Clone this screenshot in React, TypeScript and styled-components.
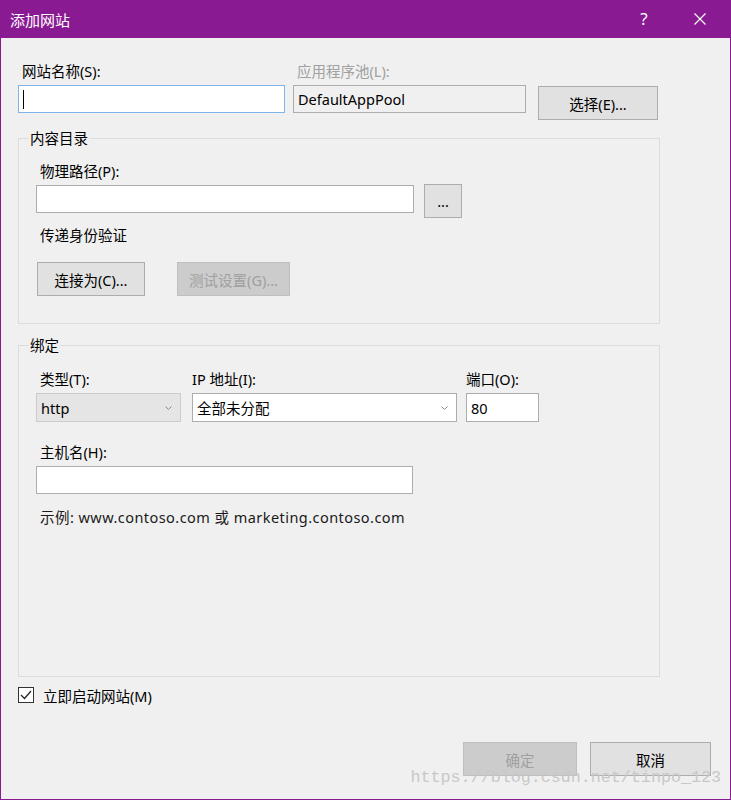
import React from "react";
import styled, { createGlobalStyle } from "styled-components";

const GlobalStyle = createGlobalStyle`
  html, body { margin: 0; padding: 0; background: #f0f0f0; }
  * { box-sizing: border-box; }
  body {
    font-family: "Segoe UI", "Noto Sans", "Noto Sans CJK SC", sans-serif;
    font-size: 14.5px;
    color: #000;
  }
`;

const PURPLE = "#8a1a92";

const Window = styled.div`
  position: relative;
  width: 731px;
  height: 800px;
  display: flex;
  flex-direction: column;
  border: 1px solid ${PURPLE};
  border-top: none;
  background: #f0f0f0;
  overflow: hidden;
`;

const TitleBar = styled.div`
  height: 38px;
  flex: none;
  background: ${PURPLE};
  color: #fff;
  display: flex;
  align-items: center;
  padding: 0 0 0 9px;
  font-size: 15px;
`;

const Title = styled.div`
  flex: 1;
  line-height: 20px;
  margin-top: 1px;
`;

const HelpGlyph = styled.div`
  width: 20px;
  text-align: center;
  font-size: 17px;
  line-height: 20px;
  margin-right: 40px;
  margin-top: -1px;
`;

const CloseBox = styled.div`
  width: 12px;
  height: 12px;
  margin-right: 24px;
  display: flex;
`;

const Body = styled.div`
  flex: 1;
  display: flex;
  flex-direction: column;
  align-items: flex-start;
  padding: 23px 19px 0 17px;
`;

const Row = styled.div<{ $mt?: number }>`
  display: flex;
  align-items: flex-start;
  margin-top: ${(p) => p.$mt ?? 0}px;
`;

const Field = styled.div<{ $w: number; $ml?: number }>`
  display: flex;
  flex-direction: column;
  width: ${(p) => p.$w}px;
  margin-left: ${(p) => p.$ml ?? 0}px;
`;

const Label = styled.div<{ $disabled?: boolean; $mt?: number; $indent?: number }>`
  height: 20px;
  line-height: 20px;
  margin: ${(p) => p.$mt ?? 0}px 0 4px ${(p) => p.$indent ?? 4}px;
  color: ${(p) => (p.$disabled ? "#a0a0a0" : "#000")};
  white-space: nowrap;
`;

const TextBox = styled.div<{
  $w?: number;
  $h?: number;
  $focus?: boolean;
  $readonly?: boolean;
}>`
  width: ${(p) => (p.$w ? `${p.$w}px` : "100%")};
  height: ${(p) => p.$h ?? 28}px;
  border: 1px solid ${(p) => (p.$focus ? "#7eb4ea" : "#adadad")};
  background: ${(p) => (p.$readonly ? "#f0f0f0" : "#fff")};
  display: flex;
  align-items: center;
  padding-left: 4px;
  white-space: nowrap;
`;

const Caret = styled.span`
  display: block;
  width: 1px;
  height: 19px;
  background: #000;
`;

const Button = styled.div<{ $w: number; $disabled?: boolean; $ml?: number; $mt?: number }>`
  width: ${(p) => p.$w}px;
  height: 34px;
  margin-left: ${(p) => p.$ml ?? 0}px;
  margin-top: ${(p) => p.$mt ?? 0}px;
  flex: none;
  display: flex;
  align-items: center;
  justify-content: center;
  background: ${(p) => (p.$disabled ? "#cccccc" : "#e1e1e1")};
  border: 1px solid ${(p) => (p.$disabled ? "#bfbfbf" : "#adadad")};
  color: ${(p) => (p.$disabled ? "#a0a0a0" : "#000")};
  white-space: nowrap;
`;

const Group = styled.fieldset<{ $mt: number }>`
  width: 642px;
  margin: ${(p) => p.$mt}px 0 0 0;
  padding: 0;
  border: 1px solid #dcdcdc;
  min-inline-size: 0;
`;

const Legend = styled.legend`
  padding: 0 1px;
  margin-left: 10px;
  line-height: 20px;
  height: 20px;
`;

const GroupBody = styled.div<{ $pt: number; $pb: number }>`
  display: flex;
  flex-direction: column;
  align-items: flex-start;
  padding: ${(p) => p.$pt}px 0 ${(p) => p.$pb}px 17px;
`;

const Select = styled.div<{ $w: number; $gray?: boolean; $ml?: number }>`
  width: ${(p) => p.$w}px;
  height: 29px;
  margin-left: ${(p) => p.$ml ?? 0}px;
  display: flex;
  align-items: center;
  justify-content: space-between;
  padding: 0 8px 0 4px;
  background: ${(p) => (p.$gray ? "#e5e5e5" : "#fff")};
  border: 1px solid ${(p) => (p.$gray ? "#cccccc" : "#adadad")};
  white-space: nowrap;
`;

const Hint = styled.div`
  height: 20px;
  line-height: 20px;
  margin: 13px 0 0 4px;
  color: #1a1a1a;
  letter-spacing: 0.45px;
  white-space: nowrap;
`;

const CheckRow = styled.div`
  display: flex;
  align-items: center;
  height: 20px;
  margin: 8px 0 0 0;
`;

const CheckBox = styled.div`
  width: 16px;
  height: 16px;
  border: 1px solid #333;
  background: #fff;
  margin-right: 9px;
  display: flex;
  align-items: center;
  justify-content: center;
`;

const Footer = styled.div`
  align-self: stretch;
  display: flex;
  justify-content: flex-end;
  gap: 13px;
  margin-top: 37px;
`;

const Watermark = styled.div`
  position: absolute;
  right: 9px;
  bottom: 11px;
  font-family: "Liberation Mono", "DejaVu Sans Mono", monospace;
  font-size: 16.7px;
  line-height: 20px;
  color: #c8c8c8;
  white-space: nowrap;
  pointer-events: none;
`;

const Chevron = () => (
  <svg width="7" height="4" viewBox="0 0 7 4">
    <polyline points="0.5,0.5 3.5,3.5 6.5,0.5" fill="none" stroke="#8a8a8a" strokeWidth="1" />
  </svg>
);

export default function App() {
  return (
    <>
      <GlobalStyle />
      <Window>
        <TitleBar>
          <Title>添加网站</Title>
          <HelpGlyph>?</HelpGlyph>
          <CloseBox>
            <svg width="12" height="12" viewBox="0 0 12 12">
              <path d="M0.5 0.5 L11.5 11.5 M11.5 0.5 L0.5 11.5" stroke="#fff" strokeWidth="1.2" fill="none" />
            </svg>
          </CloseBox>
        </TitleBar>
        <Body>
          <Row>
            <Field $w={267}>
              <Label>网站名称(S):</Label>
              <TextBox $focus>
                <Caret />
              </TextBox>
            </Field>
            <Field $w={233} $ml={8}>
              <Label $disabled>应用程序池(L):</Label>
              <TextBox $readonly>DefaultAppPool</TextBox>
            </Field>
            <Button $w={120} $ml={12} $mt={25}>
              选择(E)...
            </Button>
          </Row>

          <Group $mt={8}>
            <Legend>内容目录</Legend>
            <GroupBody $pt={13} $pb={27}>
              <Label>物理路径(P):</Label>
              <Row>
                <TextBox $w={378} />
                <Button $w={38} $ml={10} $mt={-1}>
                  ...
                </Button>
              </Row>
              <Label $mt={7}>传递身份验证</Label>
              <Row $mt={13}>
                <Button $w={108} $ml={1}>
                  连接为(C)...
                </Button>
                <Button $w={113} $ml={32} $disabled>
                  测试设置(G)...
                </Button>
              </Row>
            </GroupBody>
          </Group>

          <Group $mt={11}>
            <Legend>绑定</Legend>
            <GroupBody $pt={14} $pb={149}>
              <Row>
                <Field $w={145}>
                  <Label>类型(T):</Label>
                  <Select $w={145} $gray>
                    <span>http</span>
                    <Chevron />
                  </Select>
                </Field>
                <Field $w={265} $ml={11}>
                  <Label $indent={0}>IP 地址(I):</Label>
                  <Select $w={265}>
                    <span>全部未分配</span>
                    <Chevron />
                  </Select>
                </Field>
                <Field $w={73} $ml={9}>
                  <Label $indent={0}>端口(O):</Label>
                  <TextBox $h={29}>80</TextBox>
                </Field>
              </Row>
              <Label $mt={20}>主机名(H):</Label>
              <TextBox $w={377} />
              <Hint>示例: www.contoso.com 或 marketing.contoso.com</Hint>
            </GroupBody>
          </Group>

          <CheckRow>
            <CheckBox>
              <svg width="12" height="10" viewBox="0 0 12 10">
                <polyline points="1,5 4.5,8.5 11,1" fill="none" stroke="#222" strokeWidth="1.2" />
              </svg>
            </CheckBox>
            <span>立即启动网站(M)</span>
          </CheckRow>

          <Footer>
            <Button $w={114} $disabled>
              确定
            </Button>
            <Button $w={121}>取消</Button>
          </Footer>
        </Body>
        <Watermark>https://blog.csdn.net/tinpo_123</Watermark>
      </Window>
    </>
  );
}
